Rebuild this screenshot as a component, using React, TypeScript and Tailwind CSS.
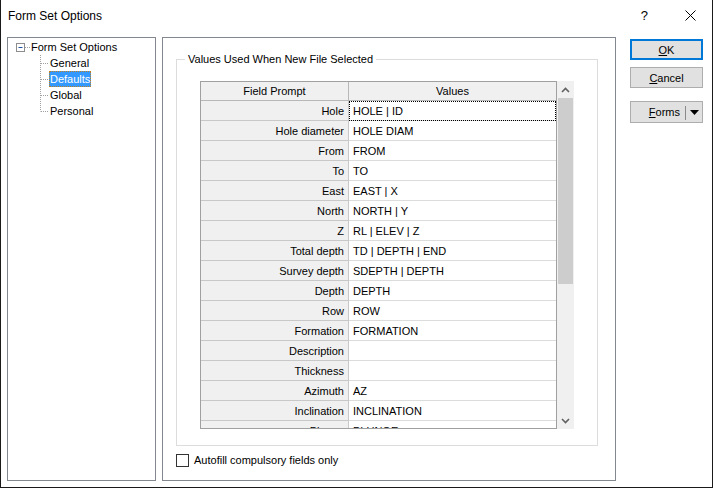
import React from "react";

const ROWS: [string, string][] = [
  ["Hole", "HOLE | ID"],
  ["Hole diameter", "HOLE DIAM"],
  ["From", "FROM"],
  ["To", "TO"],
  ["East", "EAST | X"],
  ["North", "NORTH | Y"],
  ["Z", "RL | ELEV | Z"],
  ["Total depth", "TD | DEPTH | END"],
  ["Survey depth", "SDEPTH | DEPTH"],
  ["Depth", "DEPTH"],
  ["Row", "ROW"],
  ["Formation", "FORMATION"],
  ["Description", ""],
  ["Thickness", ""],
  ["Azimuth", "AZ"],
  ["Inclination", "INCLINATION"],
  ["Plunge", "PLUNGE"],
];

const CHILDREN = ["General", "Defaults", "Global", "Personal"];

export default function App() {
  return (
    <div
      className="w-[713px] h-[488px] bg-white border-x border-b border-[#1a1a1a] text-[11px] text-black overflow-hidden"
      style={{ fontFamily: '"Liberation Sans", Arial, sans-serif' }}
    >
      {/* title bar */}
      <div className="h-[31px] flex items-center pl-[7px] pr-[16px]">
        <span className="text-[12px] flex-1">Form Set Options</span>
        <span className="text-[13px] mr-[37px]">?</span>
        <svg width="11" height="11" viewBox="0 0 11 11">
          <path d="M0.5 0.5 L10.5 10.5 M10.5 0.5 L0.5 10.5" stroke="#000" strokeWidth="1" />
        </svg>
      </div>

      <div className="flex pl-[6px] pt-[6px]">
        {/* tree */}
        <div className="w-[149px] h-[444px] border border-[#828790] pt-[1px]">
          <div className="h-[16px] flex items-center pl-[8px]">
            <svg width="15" height="16" viewBox="0 0 15 16" className="shrink-0">
              <rect x="0.5" y="4.5" width="8" height="8" fill="#fff" stroke="#8d8d8d" />
              <path d="M2.5 8.5 H6.5" stroke="#2050a0" />
              <path d="M9 8.5 H15" stroke="#a0a0a0" strokeDasharray="1 1" />
            </svg>
            <span>Form Set Options</span>
          </div>
          {CHILDREN.map((c, i) => (
            <div key={c} className="h-[16px] flex items-center pl-[32px]">
              <svg width="9" height="16" viewBox="0 0 9 16" className="shrink-0">
                <path
                  d={i === CHILDREN.length - 1 ? "M0.5 0 V8.5" : "M0.5 0 V16"}
                  stroke="#a0a0a0"
                  strokeDasharray="1 1"
                />
                <path d="M1 8.5 H9" stroke="#a0a0a0" strokeDasharray="1 1" />
              </svg>
              {c === "Defaults" ? (
                <span className="px-[1px] h-[16px] leading-[16px] bg-[#3399ff] text-white outline-1 outline-dotted outline-[#c08020] -outline-offset-1">
                  {c}
                </span>
              ) : (
                <span className="px-[1px]">{c}</span>
              )}
            </div>
          ))}
        </div>

        {/* main panel */}
        <div className="ml-[6px] w-[454px] h-[444px] border border-[#828790] pl-[13px] pt-[21px]">
          <div className="relative w-[422px] h-[387px] border border-[#dcdcdc] pl-[23px] pt-[21px]">
            <span className="absolute -top-[8px] left-[8px] bg-white px-[3px] leading-[14px]">
              Values Used When New File Selected
            </span>
            <div className="flex">
              <div className="w-[357px] h-[348px] border border-[#a0a0a0] overflow-hidden">
                <div className="flex h-[19px] bg-[#f0f0f0]">
                  <div className="w-[148px] border-r border-b border-[#b8b8b8] flex items-center justify-center">
                    Field Prompt
                  </div>
                  <div className="flex-1 border-b border-[#b8b8b8] flex items-center justify-center">
                    Values
                  </div>
                </div>
                {ROWS.map(([k, v], i) => (
                  <div key={k} className="flex h-[20px]">
                    <div className="w-[148px] bg-[#f0f0f0] border-r border-b border-[#c8c8c8] flex items-center justify-end pr-[4px] pt-[1px]">
                      {k}
                    </div>
                    <div
                      className={
                        i === 0
                          ? "flex-1 border-b border-[#dcdcdc] flex items-center pl-[4px] pt-[1px] outline-1 outline-dotted outline-black -outline-offset-1"
                          : "flex-1 border-b border-[#dcdcdc] flex items-center pl-[4px] pt-[1px]"
                      }
                    >
                      {v}
                    </div>
                  </div>
                ))}
              </div>
              {/* scrollbar */}
              <div className="w-[17px] h-[348px] bg-[#f0f0f0] flex flex-col">
                <div className="h-[17px] flex items-center justify-center">
                  <svg width="9" height="6" viewBox="0 0 9 6">
                    <path d="M1 5 L4.5 1.5 L8 5" stroke="#606060" strokeWidth="1.6" fill="none" />
                  </svg>
                </div>
                <div className="h-[186px] mx-[1px] bg-[#cdcdcd]" />
                <div className="flex-1" />
                <div className="h-[17px] flex items-center justify-center">
                  <svg width="9" height="6" viewBox="0 0 9 6">
                    <path d="M1 1 L4.5 4.5 L8 1" stroke="#606060" strokeWidth="1.6" fill="none" />
                  </svg>
                </div>
              </div>
            </div>
          </div>
          <div className="flex items-center mt-[7px] h-[14px]">
            <div className="w-[13px] h-[13px] border border-[#333] bg-white" />
            <span className="ml-[5px]">Autofill compulsory fields only</span>
          </div>
        </div>

        {/* buttons */}
        <div className="ml-[14px] w-[73px] pt-[2px] flex flex-col">
          <button className="h-[21px] w-[73px] bg-[#e1e1e1] border-2 border-[#0078d7] flex items-center justify-center pt-[1px]">
            <span>
              <u>O</u>K
            </span>
          </button>
          <button className="mt-[7px] h-[21px] w-[73px] bg-[#e1e1e1] border border-[#adadad] flex items-center justify-center pt-[1px]">
            <span>
              <u>C</u>ancel
            </span>
          </button>
          <button className="mt-[13px] h-[22px] w-[73px] bg-[#e1e1e1] border border-[#adadad] flex items-center pt-[1px]">
            <span className="flex-1 text-right pr-[5px]">
              <u>F</u>orms
            </span>
            <span className="w-px h-[14px] bg-[#8a8a8a]" />
            <span className="w-[16px] flex items-center justify-center">
              <svg width="9" height="5" viewBox="0 0 9 5">
                <path d="M0 0 H9 L4.5 5 Z" fill="#000" />
              </svg>
            </span>
          </button>
        </div>
      </div>
    </div>
  );
}
